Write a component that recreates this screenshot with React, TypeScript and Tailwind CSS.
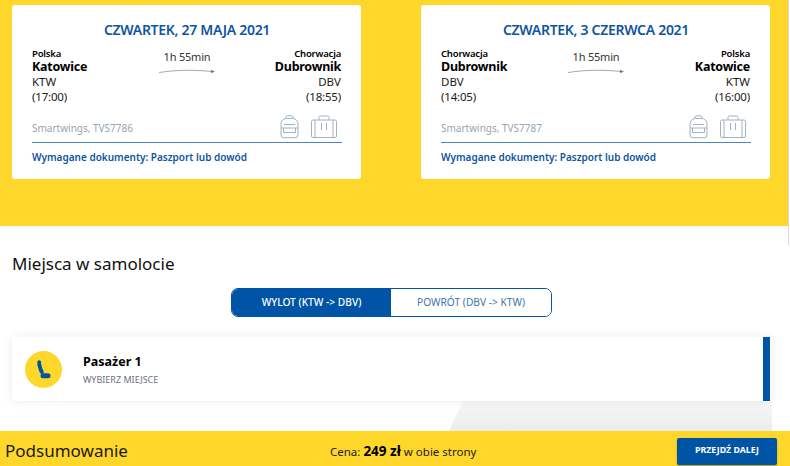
import React from 'react';

interface Flight {
  date: string;
  fromCountry: string;
  fromCity: string;
  fromCode: string;
  fromTime: string;
  toCountry: string;
  toCity: string;
  toCode: string;
  toTime: string;
  carrier: string;
}

const flights: Flight[] = [
  {
    date: 'CZWARTEK, 27 MAJA 2021',
    fromCountry: 'Polska',
    fromCity: 'Katowice',
    fromCode: 'KTW',
    fromTime: '(17:00)',
    toCountry: 'Chorwacja',
    toCity: 'Dubrownik',
    toCode: 'DBV',
    toTime: '(18:55)',
    carrier: 'Smartwings, TVS7786',
  },
  {
    date: 'CZWARTEK, 3 CZERWCA 2021',
    fromCountry: 'Chorwacja',
    fromCity: 'Dubrownik',
    fromCode: 'DBV',
    fromTime: '(14:05)',
    toCountry: 'Polska',
    toCity: 'Katowice',
    toCode: 'KTW',
    toTime: '(16:00)',
    carrier: 'Smartwings, TVS7787',
  },
];

const Backpack = () => (
  <svg width="19" height="24" viewBox="0 0 19 24" fill="none" stroke="#9fb2c6" strokeWidth="1">
    <path d="M6 3.5 V2 a1.5 1.5 0 0 1 1.5 -1.2 h4 a1.5 1.5 0 0 1 1.5 1.2 V3.5" />
    <path d="M1 20 V9 a5.5 5.5 0 0 1 5.5 -5.5 h6 A5.5 5.5 0 0 1 18 9 V20 a2.7 2.7 0 0 1 -2.7 2.7 h-11.6 A2.7 2.7 0 0 1 1 20 Z" />
    <path d="M4 9.5 H15" />
    <path d="M1 13 H18 M3.5 13 V17.5 H15.5 V13" />
  </svg>
);

const Suitcase = () => (
  <svg width="26" height="24" viewBox="0 0 26 24" fill="none" stroke="#9fb2c6" strokeWidth="1">
    <path d="M8 5 V2.5 a1.5 1.5 0 0 1 1.5 -1.5 h7 a1.5 1.5 0 0 1 1.5 1.5 V5" />
    <rect x="0.5" y="5" width="25" height="17.5" rx="1.5" />
    <path d="M4 5 V22.5 M22 5 V22.5" />
    <path d="M10.5 8 V15 M15.5 8 V15" />
  </svg>
);

const FlightArrow = () => (
  <svg width="58" height="6" viewBox="0 0 58 6" fill="none" className="mt-[3px]">
    <path d="M1 4.5 C18 2 34 1.5 54 3.5" stroke="#8d9398" strokeWidth="0.8" />
    <path d="M53 1.8 L57 3.7 L53 5 Z" fill="#6f767c" />
  </svg>
);

const SeatIcon = () => (
  <svg width="14" height="19" viewBox="0 0 14 19" fill="#0054a6">
    <path d="M1.5 0.5 C3 0 4 1 4 2 C4 4.5 5 8 6.5 11 C7.3 12.5 6.5 14 5 14 C3.5 14 2.7 12.5 2 10.5 C1 7.5 0 4.5 0.3 2 C0.4 1.2 0.8 0.8 1.5 0.5 Z" />
    <rect x="3.5" y="13.2" width="10" height="5" rx="2.5" />
  </svg>
);

const FlightCard = ({ flight }: { flight: Flight }) => (
  <div className="w-[349px] h-[174px] bg-white rounded-[3px] pl-5 pr-[19px] pt-[15px] text-[#1a1a1a]">
    <h2 className="text-center text-[#0f55a0] text-[14px] tracking-[-0.3px] leading-5 font-semibold">{flight.date}</h2>
    <div className="flex justify-between mt-[7px] h-[62px]">
      <div className="w-[120px]">
        <p className="text-[9.5px] tracking-[-0.2px] leading-[14px] font-semibold text-black">{flight.fromCountry}</p>
        <p className="text-[12.5px] tracking-[-0.25px] leading-[12px] font-bold text-black">{flight.fromCity}</p>
        <p className="text-[11.5px] leading-[17px]">{flight.fromCode}</p>
        <p className="text-[11.5px] tracking-[-0.2px] leading-[14px]">{flight.fromTime}</p>
      </div>
      <div className="flex flex-col items-center pt-[1px]">
        <p className="text-[11px] tracking-[-0.2px] leading-[17px] text-[#333]">1h 55min</p>
        <FlightArrow />
      </div>
      <div className="w-[120px] text-right pr-[1px]">
        <p className="text-[9.5px] tracking-[-0.2px] leading-[14px] font-semibold text-black">{flight.toCountry}</p>
        <p className="text-[12.5px] tracking-[-0.25px] leading-[12px] font-bold text-black">{flight.toCity}</p>
        <p className="text-[11.5px] leading-[17px]">{flight.toCode}</p>
        <p className="text-[11.5px] tracking-[-0.2px] leading-[14px]">{flight.toTime}</p>
      </div>
    </div>
    <div className="flex justify-between items-end h-[32px] border-b border-[#4a86c0] pb-[3px] mt-[2px]">
      <p className="text-[10px] leading-4 text-[#98a4b0] mb-[3px]">{flight.carrier}</p>
      <div className="flex items-end gap-[12px] mr-[5px]">
        <Backpack />
        <Suitcase />
      </div>
    </div>
    <p className="text-[10px] leading-[14px] font-semibold text-[#0f55a0] mt-[7px]">Wymagane dokumenty: Paszport lub dowód</p>
  </div>
);

export default function App() {
  return (
    <div className="w-[790px] h-[466px] overflow-hidden bg-white flex flex-col font-['Noto_Sans',sans-serif]">
      <section className="flex h-[226px] shrink-0">
        <div className="w-[788px] bg-[#ffd72b] pt-[5px] pl-3 flex gap-[60px]">
          {flights.map((flight) => (
            <FlightCard key={flight.date} flight={flight} />
          ))}
        </div>
        <div className="w-[1px] h-[245px] bg-[#d9d9d9] shrink-0 relative z-10" />
      </section>

      <section className="flex-1 flex flex-col bg-white">
        <h2 className="text-[17px] leading-6 text-[#111] pl-3 mt-[26px]">Miejsca w samolocie</h2>
        <div className="flex justify-center mt-[12px] pr-[7px]">
          <div className="flex w-[321px] h-[29px] rounded-[7px] border-[1.5px] border-[#0054a6] overflow-hidden text-[10.2px] font-medium">
            <div className="w-[159px] bg-[#0054a6] text-white flex items-center justify-center">WYLOT (KTW -&gt; DBV)</div>
            <div className="flex-1 bg-white text-[#4475aa] font-normal flex items-center justify-center">POWRÓT (DBV -&gt; KTW)</div>
          </div>
        </div>
        <div className="relative mt-[20px] ml-3 w-[759px] h-[64px] bg-white flex items-center shadow-[0_0_10px_rgba(0,0,0,0.08)] z-10">
          <div className="w-[37px] h-[37px] rounded-full bg-[#ffd72b] flex items-center justify-center ml-[13px]">
            <SeatIcon />
          </div>
          <div className="ml-[21px]">
            <p className="text-[12.5px] leading-[18px] font-bold text-black">Pasażer 1</p>
            <p className="text-[9px] leading-3 text-[#6b7280] mt-[3px]">WYBIERZ MIEJSCE</p>
          </div>
          <div className="absolute right-[1px] top-0 bottom-0 w-[7px] bg-[#0054a6]" />
        </div>
        <div className="flex-1 flex justify-end pr-[18px]">
          <div className="w-[323px] bg-gradient-to-b from-[#f7f7f7] to-[#ececec] [clip-path:polygon(14px_0,100%_0,100%_100%,0_100%)]" />
        </div>
      </section>

      <footer className="h-[35px] shrink-0 bg-[#ffd72b] flex items-center pl-[5px] pr-[13px] pt-[5px] relative z-10">
        <p className="text-[17px] leading-6 text-[#1a1a1a] w-[325px]">Podsumowanie</p>
        <p className="text-[11.5px] text-[#222]">
          Cena: <span className="text-[13.5px] font-bold text-black">249 zł</span> w obie strony
        </p>
        <button className="ml-auto w-[100px] h-[27px] bg-[#0054a6] text-white text-[8.8px] font-bold rounded-[2px] shadow-[0_1px_2px_rgba(0,0,0,0.3)]">
          PRZEJDŹ DALEJ
        </button>
      </footer>
    </div>
  );
}
